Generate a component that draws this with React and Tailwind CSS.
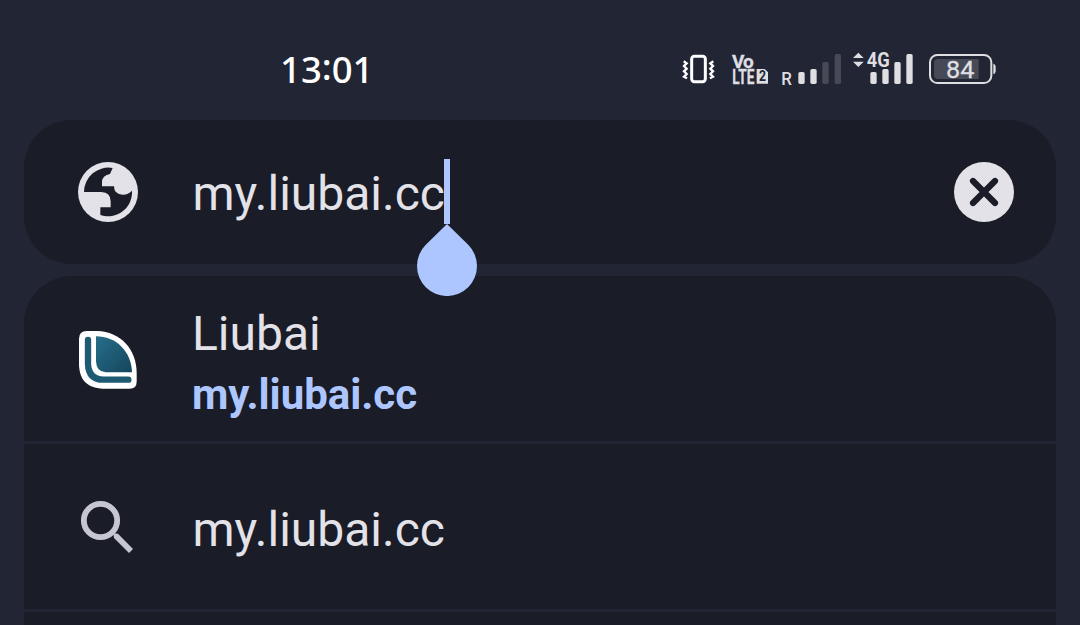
function VibrateIcon() {
  return (
    <svg className="h-9 w-[34px]" viewBox="36 33 102 108" fill="none" stroke="#fff">
      <rect x="65" y="49" width="41" height="76" rx="8" strokeWidth="9" />
      <path d="M41 64l9 6-8 8 8 8-8 8 8 8-8 8 9 5M130 64l-9 6 8 8-8 8 8 8-8 8 8 8-9 5" strokeWidth="7" />
    </svg>
  );
}

function VolteIcon() {
  return (
    <svg className="ml-[15px] h-9 w-[38px] overflow-visible" viewBox="183 33 114 108" fill="#dedee3" fontFamily="Roboto, sans-serif" fontWeight="700">
      <text x="186" y="83" fontSize="57" textLength="65" lengthAdjust="spacing" stroke="#dedee3" strokeWidth="1">Vo</text>
      <text x="187" y="131" fontSize="60" textLength="66" lengthAdjust="spacingAndGlyphs" stroke="#dedee3" strokeWidth="1">LTE</text>
      <path d="M260 87h24l10 10v34h-34z" />
      <text x="267" y="124" fontSize="42" textLength="21" lengthAdjust="spacingAndGlyphs" fill="#222533">2</text>
    </svg>
  );
}

function RoamingSignal() {
  return (
    <svg className="ml-3 h-9 w-[61px] overflow-visible" viewBox="333 33 183 108" fill="#dedee3">
      <text x="334" y="135" fontSize="54" textLength="32" lengthAdjust="spacingAndGlyphs" fontFamily="Roboto, sans-serif" fontWeight="500">R</text>
      <rect x="385" y="96" width="19" height="36" rx="5" />
      <rect x="421" y="87" width="19" height="45" rx="5" />
      <g fill="#474a56">
        <rect x="457" y="66" width="19" height="66" rx="5" />
        <rect x="494" y="42" width="19" height="90" rx="5" />
      </g>
    </svg>
  );
}

function DataSignal() {
  return (
    <svg className="ml-[10px] h-9 w-[62px] overflow-visible" viewBox="36 33 186 108" fill="#dedee3">
      <path d="M39 54l16-16 16 16zM39 65l16 16 16-16z" />
      <text x="80" y="82" fontSize="60" textLength="69" lengthAdjust="spacingAndGlyphs" fontFamily="Roboto, sans-serif" fontWeight="700">4G</text>
      <rect x="91" y="96" width="19" height="36" rx="5" />
      <rect x="127" y="87" width="19" height="45" rx="5" />
      <rect x="163" y="66" width="19" height="66" rx="5" />
      <rect x="199" y="42" width="19" height="90" rx="5" />
    </svg>
  );
}

function Battery() {
  return (
    <svg className="ml-[14px] h-9 w-[70px]" viewBox="264 33 210 108" fill="#dedee3">
      <rect x="270" y="45" width="184" height="84" rx="22" fill="none" stroke="#dedee3" strokeWidth="6" />
      <path d="M416 57v60H294q-12 0-12-12V69q0-12 12-12z" fill="#474a56" />
      <path d="M460 71q7 2 7 9v14q0 7-7 9z" />
      <text x="318" y="114" fontSize="71" textLength="85" lengthAdjust="spacingAndGlyphs" fontFamily="Roboto, sans-serif" stroke="#dedee3" strokeWidth="1">84</text>
    </svg>
  );
}

function GlobeIcon() {
  return (
    <svg className="size-[60px]" viewBox="0 0 180 180">
      <circle cx="90" cy="90" r="90" fill="#e3e2e8" />
      <path d="M104 18A73 73 0 0 0 18 90H70Q98 91 98 118V136H67V159A72 72 0 0 0 162 86Q149 99 134 98Q108 97 108 73H72V58Q74 40 96 36Z" fill="#1a1c27" />
    </svg>
  );
}

function LeafLogo() {
  return (
    <svg className="mt-[3px] size-[60px]" viewBox="54 60 180 180">
      <defs>
        <linearGradient id="leaf" x1="0" y1="0" x2="1" y2="1">
          <stop offset="0" stopColor="#286e8b" />
          <stop offset="1" stopColor="#14465c" />
        </linearGradient>
      </defs>
      <path d="M80 63H112C180 65 230 116 230 190V215Q230 236 209 236H129C81 234 59 210 57 165V86Q57 63 80 63Z" fill="#fff" />
      <path d="M108 79C168 79 214 124 216 187H137Q109 186 108 154Z" fill="url(#leaf)" />
      <path d="M84 90V162Q86 209 130 209H205" fill="none" stroke="#1f5a73" strokeWidth="19" strokeLinecap="round" />
    </svg>
  );
}

function SearchIcon() {
  return (
    <svg className="mt-[5px] size-[60px]" viewBox="54 57 180 180">
      <circle cx="121.500" cy="121.500" r="50" fill="none" stroke="#c5c6d0" strokeWidth="17.500" />
      <path d="M160 160L174 161L219 207L207 219L162 174Z" fill="#c5c6d0" />
    </svg>
  );
}

function ClearButton() {
  return (
    <button type="button" aria-label="Clear" className="ml-auto size-[60px]">
      <svg className="size-full" viewBox="0 0 60 60">
        <circle cx="30" cy="30" r="30" fill="#e3e2e8" />
        <path d="M19 19L41 41M41 19L19 41" stroke="#1a1c27" strokeWidth="6.200" strokeLinecap="round" />
      </svg>
    </button>
  );
}

function Caret() {
  return (
    <span className="absolute top-[-7px] left-[251.5px] h-[65px] w-1.5 bg-[#adc6ff]">
      <svg className="absolute top-[65px] left-[-27px] h-[72px] w-[60px] max-w-none" viewBox="0 0 60 72">
        <path d="M30 0L51.200 20.800A30 30 0 1 1 8.800 20.800Z" fill="#adc6ff" />
      </svg>
    </span>
  );
}

export default function App() {
  return (
    <div className="flex h-[625px] w-[1080px] flex-col overflow-hidden bg-[#222533] px-6 font-['Roboto',sans-serif] text-5xl text-[#e3e2e8]">
      <header className="flex h-[120px] shrink-0 items-center pt-[18px] pr-[58px] pl-[256px]">
        <time className="font-['Noto_Sans',sans-serif] text-[36.5px] leading-none font-medium text-white">
          13<span className="relative -top-[3px]">:</span>01
        </time>
        <div className="ml-auto flex items-center">
          <VibrateIcon />
          <VolteIcon />
          <RoamingSignal />
          <DataSignal />
          <Battery />
        </div>
      </header>

      <div className="relative z-10 flex h-36 shrink-0 items-center rounded-[48px] bg-[#1a1c27] pr-[42px] pl-[54px]">
        <GlobeIcon />
        <div className="relative mt-1 ml-[54.5px] h-[56px] leading-[56px]">
          my.liubai.cc
          <Caret />
        </div>
        <ClearButton />
      </div>

      <ul className="mt-3 h-[349px] shrink-0 rounded-t-[48px] bg-[#1a1c27]">
        <li className="flex h-[168px] items-center border-b-3 border-[#222533] pl-[54px]">
          <LeafLogo />
          <div className="mt-[9px] ml-[54px]">
            <p className="h-[64px] leading-[56px]">Liubai</p>
            <p className="text-[42px] leading-[50px] font-bold tracking-[-0.05px] text-[#adc6ff]">my.liubai.cc</p>
          </div>
        </li>
        <li className="flex h-[168px] items-center border-b-3 border-[#222533] pl-[54px]">
          <SearchIcon />
          <p className="mt-1.5 ml-[54.5px] leading-[56px]">my.liubai.cc</p>
        </li>
      </ul>
    </div>
  );
}
